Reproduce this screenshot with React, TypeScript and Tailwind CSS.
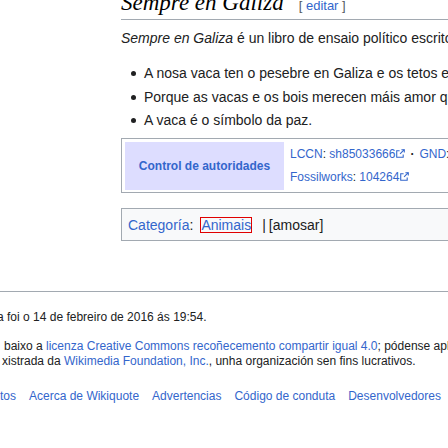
import React from "react";

const sans = { fontFamily: '"Liberation Sans", Arial, sans-serif' };

const ExtIcon = () => (
  <svg width="9" height="9" viewBox="0 0 10 10" className="ml-[1px] inline-block align-[0px]" fill="none" stroke="#36c" strokeWidth="1.2">
    <path d="M8 6v3.2H0.8V2H4" />
    <path d="M4.5 5.5L9.2 0.8" />
    <path d="M6 0.8h3.2V4" />
  </svg>
);

const items = [
  "A nosa vaca ten o pesebre en Galiza e os tetos en Madrid.",
  "Porque as vacas e os bois merecen máis amor que os homes.",
  "A vaca é o símbolo da paz.",
];

const footerLinks = ["tos", "Acerca de Wikiquote", "Advertencias", "Código de conduta", "Desenvolvedores", "Estatísticas"];

const App = () => {
  return (
    <div className="relative h-[448px] w-[448px] overflow-hidden bg-white text-[#202122]" style={sans}>
      {/* contido */}
      <div className="w-[700px] pl-[121px]">
        <div className="-mt-[12px] flex items-baseline border-b border-[#a2a9b1] pb-[1px] whitespace-nowrap">
          <h2 className="text-[23px] italic leading-[30px] text-black" style={{ fontFamily: '"Liberation Serif", "Times New Roman", serif' }}>
            Sempre en Galiza
          </h2>
          <span className="ml-[15px] text-[13px] text-[#54595d]">
            [ <span className="text-[#36c]">editar</span> ]
          </span>
        </div>

        <p className="mt-[7px] whitespace-nowrap text-[14px] leading-[22px]">
          <i>Sempre en Galiza</i> é un libro de ensaio político escrito por Alfonso Daniel Rodríguez Castelao.
        </p>

        <ul className="mt-[13px] text-[14px] leading-[23.5px]">
          {items.map((t) => (
            <li key={t} className="flex items-center whitespace-nowrap">
              <span className="ml-[10px] mr-[8px] h-[5px] w-[5px] rounded-full bg-[#202122]" />
              {t}
            </li>
          ))}
        </ul>

        <div className="mt-[5px] flex border border-[#a2a9b1] px-[3px] pt-[3px] pb-[2px]">
          <div className="flex h-[48px] w-[159px] items-center justify-center bg-[#ddddff] text-[12px] font-bold text-[#36c]">
            Control de autoridades
          </div>
          <div className="flex flex-col justify-center pl-[6px] text-[12px] leading-[22.5px] whitespace-nowrap">
            <div>
              <span className="text-[#36c]">LCCN</span>: <span className="text-[#36c]">sh85033666</span>
              <ExtIcon />
              <span className="mx-[5px] font-bold">·</span>
              <span className="text-[#36c]">GND</span>: <span className="text-[#36c]">4148384-5</span>
            </div>
            <div>
              <span className="text-[#36c]">Fossilworks</span>: <span className="text-[#36c]">104264</span>
              <ExtIcon />
            </div>
          </div>
        </div>

        <div className="mt-[15px] flex h-[33px] items-center border border-[#a2a9b1] bg-[#f8f9fa] px-[6px] pt-[2px] text-[14px] whitespace-nowrap">
          <span className="text-[#36c]">Categoría</span>
          <span>:</span>
          <span className="ml-[7px] inline-block border border-[#e00000] leading-[14px] text-[#36c]">Animais</span>
          <span className="ml-[10px]">|</span>
          <span className="ml-[3px]">[amosar]</span>
        </div>
      </div>

      {/* rodapé */}
      <div className="mt-[50px] border-t border-[#a2a9b1] pt-[18px] text-[12px] leading-[15px] whitespace-nowrap">
        <p className="-ml-[3px]">a foi o 14 de febreiro de 2016 ás 19:54.</p>
        <p className="mt-[14px] ml-[4px]">
          baixo a <span className="text-[#36c]">licenza Creative Commons recoñecemento compartir igual 4.0</span>; pódense aplicar termos adicionais.
        </p>
        <p className="ml-[2px]">
          xistrada da <span className="text-[#36c]">Wikimedia Foundation, Inc.</span>, unha organización sen fins lucrativos.
        </p>
        <div className="mt-[20px] flex gap-[13px] text-[#36c]">
          {footerLinks.map((l) => (
            <span key={l}>{l}</span>
          ))}
        </div>
      </div>
    </div>
  );
};

export default App;
